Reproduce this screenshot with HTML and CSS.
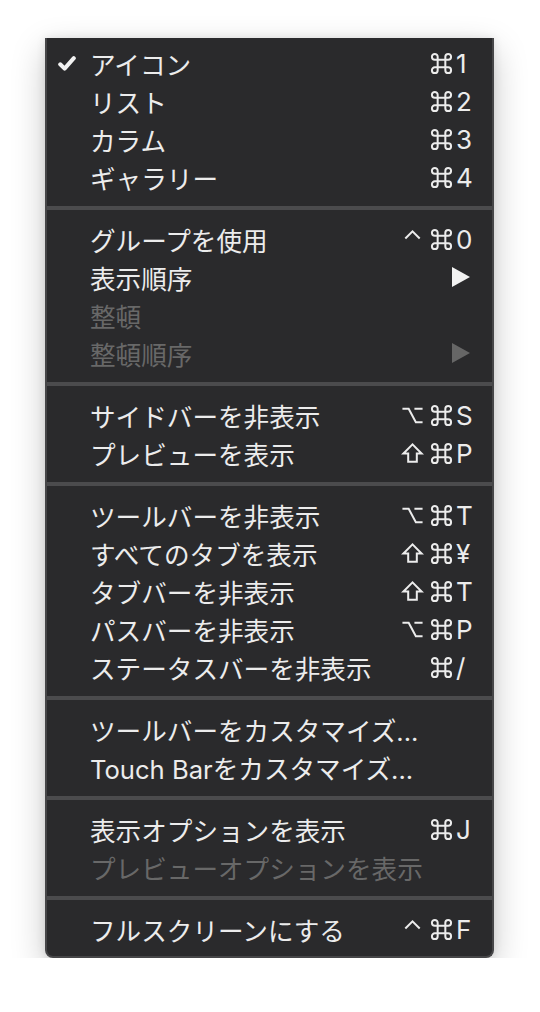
FILE: index.html
```html
<!DOCTYPE html>
<html lang="ja">

<head>
    <meta charset="utf-8">
    <title>表示メニュー</title>
    <link rel="stylesheet" href="styles.css">
</head>

<body>
    <svg class="defs" width="0" height="0">
        <symbol id="cmd" viewBox="0 0 24 24"><path d="M8 8 V5 A3 3 0 1 0 5 8 H19 A3 3 0 1 0 16 5 V19 A3 3 0 1 0 19 16 H5 A3 3 0 1 0 8 19 Z" /></symbol>
        <symbol id="opt" viewBox="0 0 24 24"><path d="M1.5 5 H8 L15.5 19 H22.5 M14 5 H22.5" /></symbol>
        <symbol id="shift" viewBox="0 0 24 24"><path d="M12 2.5 L2.5 12 H7.5 V20.5 H16.5 V12 H21.5 Z" /></symbol>
        <symbol id="ctrl" viewBox="0 0 24 24"><path d="M4.5 11 L12 3.5 L19.5 11" /></symbol>
    </svg>

    <div class="menu">
        <div class="item">
            <span class="check">
                <svg width="18" height="15" viewBox="0 0 18 15"><path d="M2.2 8.3 L6.6 12.6 L15.8 2.2" /></svg>
            </span>
            <span class="label">アイコン</span>
            <span class="keys"><span class="mod"><svg><use href="#cmd" /></svg></span><span class="key">1</span></span>
        </div>
        <div class="item">
            <span class="check"></span>
            <span class="label">リスト</span>
            <span class="keys"><span class="mod"><svg><use href="#cmd" /></svg></span><span class="key">2</span></span>
        </div>
        <div class="item">
            <span class="check"></span>
            <span class="label">カラム</span>
            <span class="keys"><span class="mod"><svg><use href="#cmd" /></svg></span><span class="key">3</span></span>
        </div>
        <div class="item">
            <span class="check"></span>
            <span class="label">ギャラリー</span>
            <span class="keys"><span class="mod"><svg><use href="#cmd" /></svg></span><span class="key">4</span></span>
        </div>

        <div class="sep"></div>

        <div class="item">
            <span class="check"></span>
            <span class="label">グループを使用</span>
            <span class="keys"><span class="mod"><svg><use href="#ctrl" /></svg></span><span class="mod"><svg><use href="#cmd" /></svg></span><span class="key">0</span></span>
        </div>
        <div class="item">
            <span class="check"></span>
            <span class="label">表示順序</span>
            <span class="keys"><span class="arrow"><svg width="18" height="20" viewBox="0 0 18 20"><polygon points="0,0 18,10 0,20" /></svg></span></span>
        </div>
        <div class="item disabled">
            <span class="check"></span>
            <span class="label">整頓</span>
        </div>
        <div class="item disabled">
            <span class="check"></span>
            <span class="label">整頓順序</span>
            <span class="keys"><span class="arrow"><svg width="18" height="20" viewBox="0 0 18 20"><polygon points="0,0 18,10 0,20" /></svg></span></span>
        </div>

        <div class="sep"></div>

        <div class="item">
            <span class="check"></span>
            <span class="label">サイドバーを非表示</span>
            <span class="keys"><span class="mod"><svg><use href="#opt" /></svg></span><span class="mod"><svg><use href="#cmd" /></svg></span><span class="key">S</span></span>
        </div>
        <div class="item">
            <span class="check"></span>
            <span class="label">プレビューを表示</span>
            <span class="keys"><span class="mod"><svg><use href="#shift" /></svg></span><span class="mod"><svg><use href="#cmd" /></svg></span><span class="key">P</span></span>
        </div>

        <div class="sep"></div>

        <div class="item">
            <span class="check"></span>
            <span class="label">ツールバーを非表示</span>
            <span class="keys"><span class="mod"><svg><use href="#opt" /></svg></span><span class="mod"><svg><use href="#cmd" /></svg></span><span class="key">T</span></span>
        </div>
        <div class="item">
            <span class="check"></span>
            <span class="label">すべてのタブを表示</span>
            <span class="keys"><span class="mod"><svg><use href="#shift" /></svg></span><span class="mod"><svg><use href="#cmd" /></svg></span><span class="key">¥</span></span>
        </div>
        <div class="item">
            <span class="check"></span>
            <span class="label">タブバーを非表示</span>
            <span class="keys"><span class="mod"><svg><use href="#shift" /></svg></span><span class="mod"><svg><use href="#cmd" /></svg></span><span class="key">T</span></span>
        </div>
        <div class="item">
            <span class="check"></span>
            <span class="label">パスバーを非表示</span>
            <span class="keys"><span class="mod"><svg><use href="#opt" /></svg></span><span class="mod"><svg><use href="#cmd" /></svg></span><span class="key">P</span></span>
        </div>
        <div class="item">
            <span class="check"></span>
            <span class="label">ステータスバーを非表示</span>
            <span class="keys"><span class="mod"><svg><use href="#cmd" /></svg></span><span class="key">/</span></span>
        </div>

        <div class="sep"></div>

        <div class="item">
            <span class="check"></span>
            <span class="label">ツールバーをカスタマイズ...</span>
        </div>
        <div class="item">
            <span class="check"></span>
            <span class="label">Touch Barをカスタマイズ...</span>
        </div>

        <div class="sep"></div>

        <div class="item">
            <span class="check"></span>
            <span class="label">表示オプションを表示</span>
            <span class="keys"><span class="mod"><svg><use href="#cmd" /></svg></span><span class="key">J</span></span>
        </div>
        <div class="item disabled">
            <span class="check"></span>
            <span class="label">プレビューオプションを表示</span>
        </div>

        <div class="sep"></div>

        <div class="item">
            <span class="check"></span>
            <span class="label">フルスクリーンにする</span>
            <span class="keys"><span class="mod"><svg><use href="#ctrl" /></svg></span><span class="mod"><svg><use href="#cmd" /></svg></span><span class="key">F</span></span>
        </div>
    </div>
</body>

</html>
```

FILE: styles.css
```css
body {
    margin: 0;
    background: #ffffff;
    font-family: "Inter", "Noto Sans CJK JP", "DejaVu Sans", sans-serif;
}

.defs {
    position: absolute;
}

.menu {
    width: 445px;
    margin: 38px 0 0 45px;
    padding: 6px 0 8px;
    background: #2a2a2c;
    border: 2px solid #464648;
    border-top: none;
    border-radius: 0 0 8px 8px;
    box-shadow: 0 12px 34px rgba(0, 0, 0, 0.22), 0 0 10px rgba(0, 0, 0, 0.1);
    color: #ececec;
    font-size: 25.6px;
}

.item {
    display: flex;
    align-items: center;
    height: 38px;
    padding-right: 14px;
}

.item.disabled {
    color: #686868;
}

.check {
    width: 43px;
    flex: none;
    display: flex;
    align-items: center;
    padding-left: 11px;
    box-sizing: border-box;
}

.check svg path {
    fill: none;
    stroke: #f2f2f2;
    stroke-width: 4;
    stroke-linecap: round;
    stroke-linejoin: round;
}

.label {
    flex: 1;
    white-space: nowrap;
}

.keys {
    display: flex;
    align-items: center;
}

.mod {
    display: flex;
    justify-content: center;
    width: 29px;
}

.mod svg {
    width: 23px;
    height: 23px;
    fill: none;
    stroke: #ececec;
    stroke-width: 2.1;
    stroke-linejoin: miter;
}

.key {
    width: 22px;
    text-align: left;
    font-size: 26px;
}

.arrow {
    display: flex;
    width: 20px;
    margin-right: 6px;
}

.arrow svg polygon {
    fill: #f2f2f2;
}

.disabled .arrow svg polygon {
    fill: #666666;
}

.sep {
    height: 4px;
    margin: 10px 0;
    background: #4b4b4d;
}
```
